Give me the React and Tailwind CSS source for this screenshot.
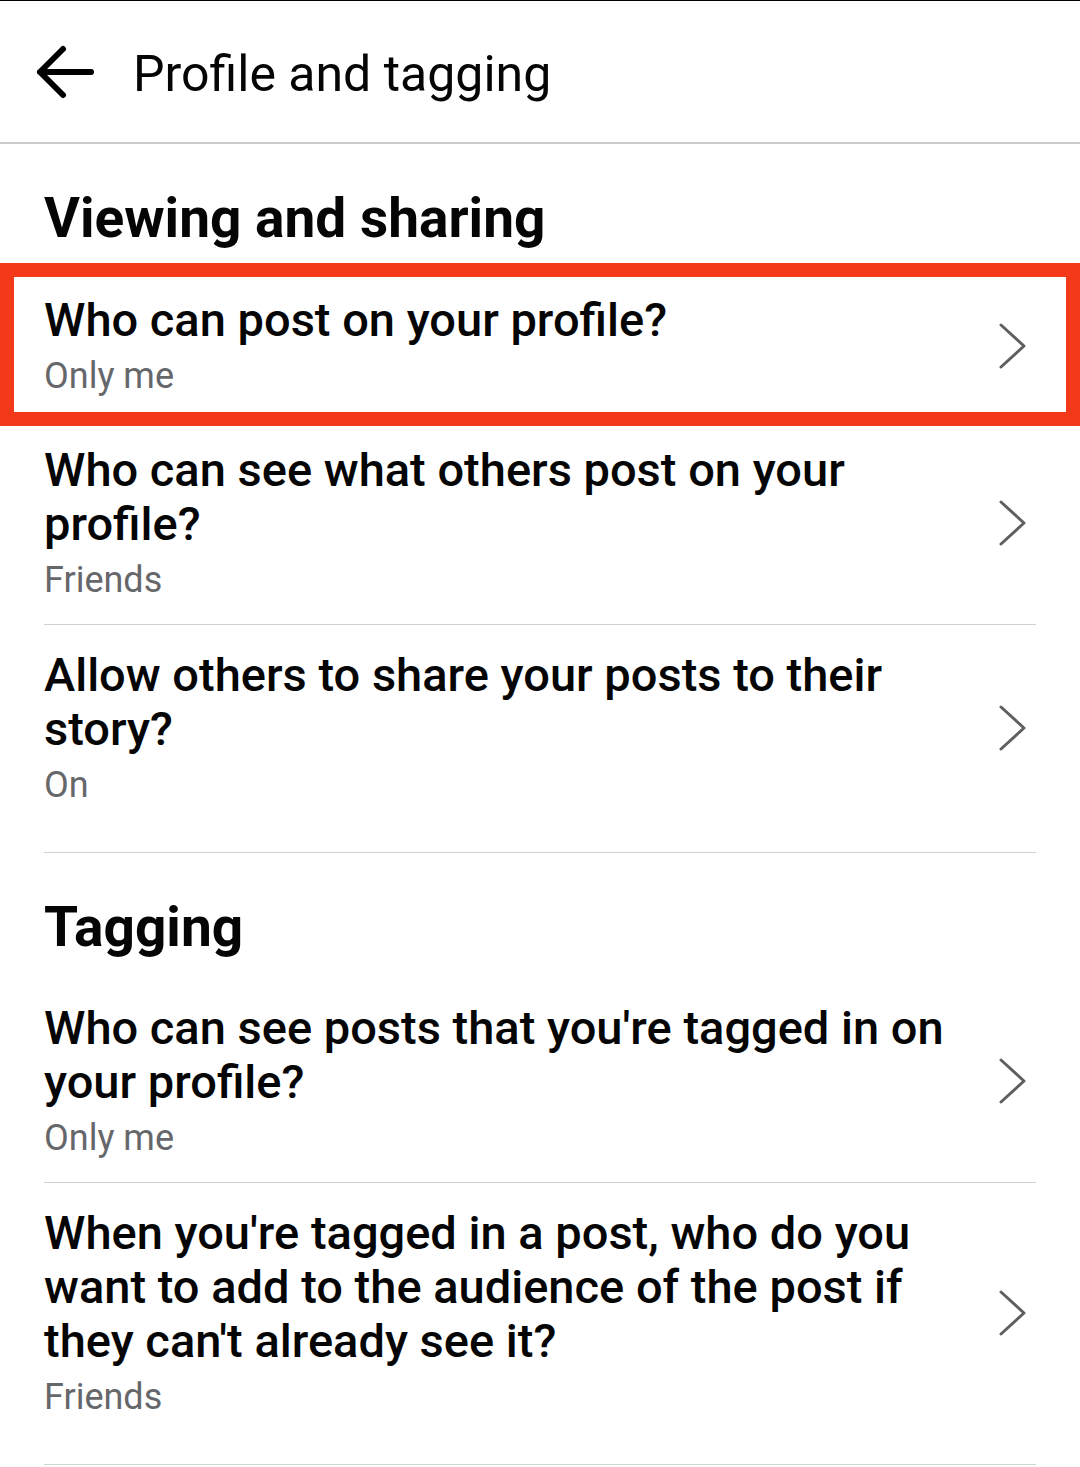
import React from "react";

const font = { fontFamily: "Roboto, 'Noto Sans', Arial, sans-serif" };

function Chevron() {
  return (
    <svg width="30" height="48" viewBox="0 0 30 48" className="shrink-0 mr-[8px]" fill="none">
      <path d="M3 3 L26 24 L3 45" stroke="#5f5f5f" strokeWidth="3" strokeLinecap="round" strokeLinejoin="round" />
    </svg>
  );
}

function Item({ lines, sub, className = "" }) {
  return (
    <div className={"flex items-center " + className}>
      <div className="flex-1">
        {lines.map((l, i) => (
          <div key={i} className="text-[47px] leading-[54px] font-medium text-[#050505] whitespace-nowrap">
            {l}
          </div>
        ))}
        <div className="mt-[6px] text-[36px] leading-[46px] text-[#65676b]">{sub}</div>
      </div>
      <Chevron />
    </div>
  );
}

function Divider() {
  return <div className="mx-[44px] h-[1px] bg-[#d2d2d2]" />;
}

export default function App() {
  return (
    <div className="w-[1080px] min-h-screen bg-white" style={font}>
      <div className="h-[1px] bg-black" />
      <div className="h-[141px] flex items-center">
        <svg width="60" height="56" viewBox="0 0 60 56" className="ml-[35px]" fill="none">
          <path d="M5 28 H56 M5 28 L28 5 M5 28 L28 51" stroke="#000" strokeWidth="6" strokeLinecap="round" strokeLinejoin="round" />
        </svg>
        <div className="ml-[38px] mt-[6px] text-[50px] text-[#050505]">Profile and tagging</div>
      </div>
      <div className="h-[2px] bg-[#cbcbcb]" />

      <div className="mt-[44px] px-[44px] text-[55px] leading-[60px] font-bold text-[#050505]">Viewing and sharing</div>

      <div className="mt-[15px] border-[14px] border-[#f4381a] pl-[30px] pr-[30px] pt-[16px] pb-[13px]">
        <Item lines={["Who can post on your profile?"]} sub="Only me" />
      </div>

      <Item className="px-[44px] pt-[17px] pb-[21px]" lines={["Who can see what others post on your", "profile?"]} sub="Friends" />
      <Divider />
      <Item className="px-[44px] pt-[23px] pb-[44px]" lines={["Allow others to share your posts to their", "story?"]} sub="On" />
      <Divider />

      <div className="mt-[44px] px-[44px] text-[55px] leading-[60px] font-bold text-[#050505]">Tagging</div>

      <Item className="px-[44px] pt-[44px] pb-[21px]" lines={["Who can see posts that you're tagged in on", "your profile?"]} sub="Only me" />
      <Divider />
      <Item
        className="px-[44px] pt-[23px] pb-[44px]"
        lines={["When you're tagged in a post, who do you", "want to add to the audience of the post if", "they can't already see it?"]}
        sub="Friends"
      />
      <Divider />
    </div>
  );
}
